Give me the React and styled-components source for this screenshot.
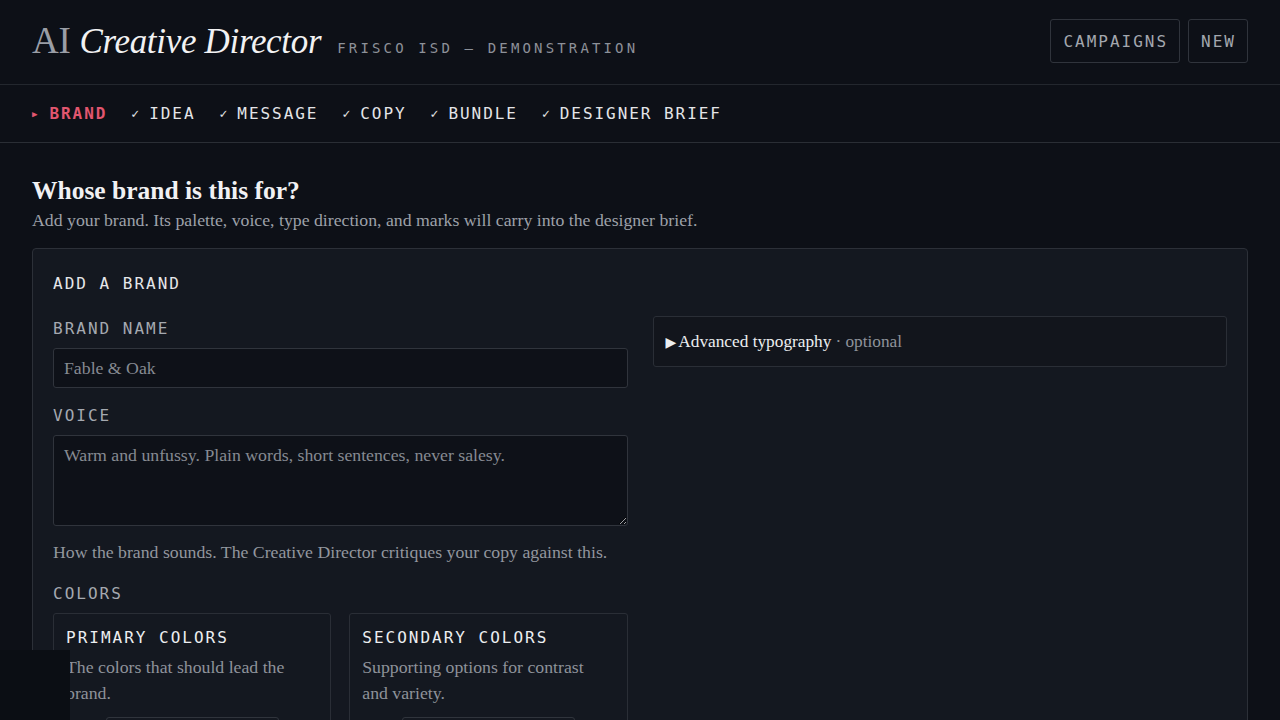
import React from "react";
import styled, { createGlobalStyle } from "styled-components";

const serif = `"Liberation Serif", "DejaVu Serif", serif`;
const mono = `"DejaVu Sans Mono", "Liberation Mono", monospace`;

const GlobalStyle = createGlobalStyle`
  html, body {
    margin: 0;
    padding: 0;
    background: #0d1017;
    color: #e6e7ea;
    font-family: ${serif};
  }
  * {
    box-sizing: border-box;
  }
`;

const Page = styled.div`
  min-height: 100vh;
  background: #0d1017;
`;

const Header = styled.header`
  display: flex;
  align-items: center;
  justify-content: space-between;
  height: 85px;
  padding: 0 32px;
  border-bottom: 1px solid #23272e;
`;

const Brand = styled.div`
  display: flex;
  align-items: baseline;
  gap: 16px;
  padding-bottom: 4px;
`;

const Logo = styled.h1`
  margin: 0;
  font-family: ${serif};
  font-weight: 400;
  font-size: 37px;
  color: #f2f2f3;
  letter-spacing: -0.3px;
  span {
    color: #9a9ea6;
    margin-right: 9px;
  }
  em {
    font-style: italic;
    font-size: 0.945em;
  }
`;

const Tagline = styled.span`
  font-family: ${mono};
  font-size: 14px;
  letter-spacing: 3.15px;
  color: #8d9199;
`;

const Actions = styled.div`
  display: flex;
  gap: 8px;
  padding-bottom: 2px;
`;

const HeaderButton = styled.button`
  height: 44px;
  padding: 0 11px 0 12px;
  background: transparent;
  border: 1px solid #30343c;
  border-radius: 3px;
  font-family: ${mono};
  font-size: 16px;
  letter-spacing: 2px;
  color: #a3a7ae;
`;

const Steps = styled.nav`
  display: flex;
  align-items: center;
  gap: 24px;
  height: 58px;
  padding: 0 32px;
  border-bottom: 1px solid #2a2e35;
`;

const Step = styled.span`
  display: flex;
  align-items: center;
  gap: 10px;
  font-family: ${mono};
  font-size: 16px;
  letter-spacing: 1.95px;
  font-weight: ${(p) => (p.$active ? 700 : 400)};
  color: ${(p) => (p.$active ? "#e2566f" : "#e4e5e8")};
`;

const StepMark = styled.span`
  font-size: ${(p) => (p.$active ? "9px" : "13px")};
  margin-right: ${(p) => (p.$active ? "2px" : "0")};
  letter-spacing: 0;
  font-weight: 400;
`;

const Main = styled.main`
  padding: 33px 32px 0;
`;

const Question = styled.h2`
  margin: 0;
  font-family: ${serif};
  font-weight: 700;
  font-size: 25.5px;
  color: #f1f1f3;
`;

const Lead = styled.p`
  margin: 4px 0 17px;
  font-size: 17.75px;
  color: #9da1a9;
`;

const Card = styled.section`
  background: #141820;
  border: 1px solid #2c3038;
  border-radius: 4px;
  padding: 25px 20px 0;
`;

const CardTitle = styled.h3`
  margin: 0 0 24px;
  font-family: ${mono};
  font-weight: 400;
  font-size: 16px;
  letter-spacing: 2px;
  color: #e6e7ea;
`;

const Columns = styled.div`
  display: grid;
  grid-template-columns: 1fr 1fr;
  gap: 25px;
  align-items: start;
`;

const Column = styled.div`
  display: flex;
  flex-direction: column;
`;

const Label = styled.label`
  display: block;
  margin: 2px 0 10px;
  font-family: ${mono};
  font-size: 16px;
  letter-spacing: 2px;
  color: #a5a9b0;
`;

const fieldStyle = `
  width: 100%;
  background: #0e1118;
  border: 1px solid #30343c;
  border-radius: 3px;
  padding: 9px 10px;
  font-family: ${serif};
  font-size: 17.75px;
  color: #e6e7ea;
  outline: none;
  &::placeholder {
    color: #868a92;
  }
`;

const Input = styled.input`
  ${fieldStyle}
  height: 40px;
  margin-bottom: 16px;
`;

const TextArea = styled.textarea`
  ${fieldStyle}
  height: 91px;
  resize: vertical;
  display: block;
`;

const Help = styled.p`
  margin: 16px 0 19px;
  font-size: 17.75px;
  color: #92969e;
`;

const Palette = styled.div`
  display: grid;
  grid-template-columns: 1fr 1fr;
  gap: 18px;
`;

const Swatches = styled.div`
  border: 1px solid #2a2e36;
  border-radius: 3px;
  padding: 14px 12px 0;
  height: 140px;
`;

const SwatchTitle = styled.h4`
  margin: 0 0 7px;
  font-family: ${mono};
  font-weight: 400;
  font-size: 16px;
  letter-spacing: 2px;
  color: #eceef0;
`;

const SwatchNote = styled.p`
  margin: 0;
  padding-right: 6px;
  font-size: 17.75px;
  line-height: 26px;
  color: #8e929a;
`;

const SwatchSlot = styled.div`
  margin: 11px auto 0;
  width: 173px;
  height: 30px;
  border: 1px solid #30343c;
  border-radius: 3px;
`;

const Details = styled.details`
  margin-top: -1px;
  border: 1px solid #2a2e36;
  border-radius: 3px;
  background: #12151c;
`;

const Summary = styled.summary`
  display: flex;
  align-items: center;
  list-style: none;
  padding: 15px 12px 14px;
  font-size: 17.3px;
  color: #eceef0;
  cursor: pointer;
  &::-webkit-details-marker {
    display: none;
  }
`;

const Caret = styled.span`
  font-family: "DejaVu Sans", sans-serif;
  font-size: 14px;
  margin-right: 2px;
`;

const Optional = styled.span`
  color: #8e929a;
  margin-left: 4px;
`;

const Corner = styled.div`
  position: fixed;
  left: 0;
  bottom: 0;
  width: 70px;
  height: 70px;
  background: #0b0e14;
`;

const steps = ["IDEA", "MESSAGE", "COPY", "BUNDLE", "DESIGNER BRIEF"];

export default function App() {
  return (
    <Page>
      <GlobalStyle />
      <Header>
        <Brand>
          <Logo>
            <span>AI</span>
            <em>Creative Director</em>
          </Logo>
          <Tagline>FRISCO ISD — DEMONSTRATION</Tagline>
        </Brand>
        <Actions>
          <HeaderButton>CAMPAIGNS</HeaderButton>
          <HeaderButton>NEW</HeaderButton>
        </Actions>
      </Header>

      <Steps>
        <Step $active>
          <StepMark $active>▶</StepMark>BRAND
        </Step>
        {steps.map((s) => (
          <Step key={s}>
            <StepMark>✓</StepMark>
            {s}
          </Step>
        ))}
      </Steps>

      <Main>
        <Question>Whose brand is this for?</Question>
        <Lead>
          Add your brand. Its palette, voice, type direction, and marks will
          carry into the designer brief.
        </Lead>

        <Card>
          <CardTitle>ADD A BRAND</CardTitle>
          <Columns>
            <Column>
              <Label>BRAND NAME</Label>
              <Input placeholder="Fable & Oak" />
              <Label>VOICE</Label>
              <TextArea placeholder="Warm and unfussy. Plain words, short sentences, never salesy." />
              <Help>
                How the brand sounds. The Creative Director critiques your copy
                against this.
              </Help>
              <Label>COLORS</Label>
              <Palette>
                <Swatches>
                  <SwatchTitle>PRIMARY COLORS</SwatchTitle>
                  <SwatchNote>The colors that should lead the brand.</SwatchNote>
                  <SwatchSlot />
                </Swatches>
                <Swatches>
                  <SwatchTitle>SECONDARY COLORS</SwatchTitle>
                  <SwatchNote>Supporting options for contrast and variety.</SwatchNote>
                  <SwatchSlot />
                </Swatches>
              </Palette>
            </Column>
            <Column>
              <Details>
                <Summary>
                  <Caret>▶</Caret>
                  Advanced typography
                  <Optional>· optional</Optional>
                </Summary>
              </Details>
            </Column>
          </Columns>
        </Card>
      </Main>
      <Corner />
    </Page>
  );
}
